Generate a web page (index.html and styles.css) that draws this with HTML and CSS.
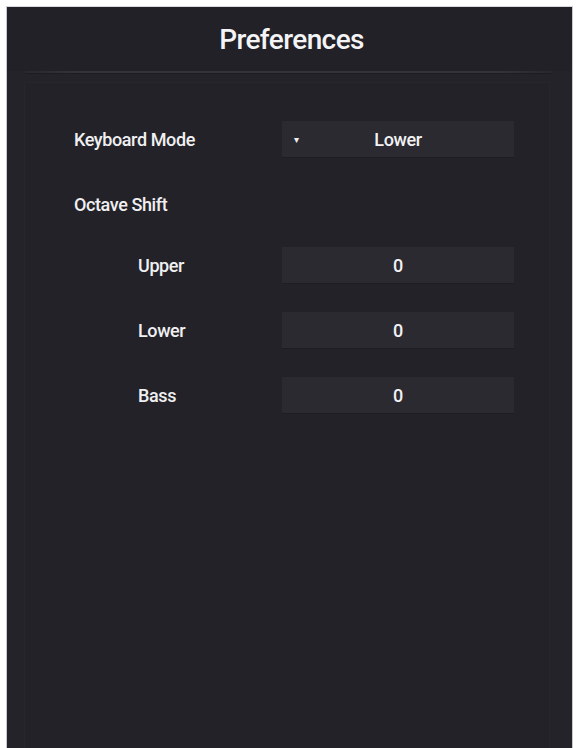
FILE: index.html
```html
<!DOCTYPE html>
<html lang="en">
<head>
<meta charset="utf-8">
<title>Preferences</title>
<link rel="stylesheet" href="styles.css">
</head>
<body>
<div class="window">
  <header class="header">
    <h1 class="title">Preferences</h1>
  </header>
  <div class="divider"></div>
  <main class="content">
    <div class="row">
      <span class="label">Keyboard Mode</span>
      <div class="field select">
        <span class="arrow">&#9662;</span>
        <span class="value">Lower</span>
      </div>
    </div>
    <div class="row section">
      <span class="label">Octave Shift</span>
    </div>
    <div class="row">
      <span class="label sub">Upper</span>
      <div class="field"><span class="value">0</span></div>
    </div>
    <div class="row">
      <span class="label sub">Lower</span>
      <div class="field"><span class="value">0</span></div>
    </div>
    <div class="row">
      <span class="label sub">Bass</span>
      <div class="field"><span class="value">0</span></div>
    </div>
  </main>
</div>
</body>
</html>
```

FILE: styles.css
```css
html, body {
  margin: 0;
  padding: 0;
  height: 100%;
  background: #ffffff;
}

body {
  font-family: Roboto, "Noto Sans", "Liberation Sans", sans-serif;
  color: #f2f2f4;
}

.window {
  box-sizing: border-box;
  margin: 6px 3px 0 6px;
  height: calc(100% - 6px);
  background: #242329;
  border-left: 1px solid #c8c8cc;
  border-top: 1px solid #d8d8dc;
  border-right: 1px solid #c8c8cc;
  display: flex;
  flex-direction: column;
}

.header {
  height: 64px;
  display: flex;
  align-items: center;
  justify-content: center;
  background: #222127;
}

.title {
  margin: 0;
  font-size: 28px;
  font-weight: 500;
  letter-spacing: -0.6px;
  color: #f4f4f6;
  padding-left: 4px;
}

.divider {
  height: 2px;
  margin: 0 20px 0 18px;
  background: linear-gradient(to right, rgba(60,59,66,0.2), #34333a 10%, #34333a 90%, rgba(60,59,66,0.2));
  border-bottom: 1px solid #1d1c21;
}

.content {
  flex: 1;
  margin: 8px 22px 0 17px;
  background: #232228;
  border: 1px solid #27262c;
  border-bottom: none;
  padding-top: 38px;
  display: flex;
  flex-direction: column;
  gap: 29px;
}

.row {
  display: grid;
  grid-template-columns: 257px 232px;
  align-items: center;
  height: 36px;
}

.row.section {
  margin-bottom: -4px;
}

.label {
  padding-left: 49px;
  font-size: 18px;
  font-weight: 500;
  letter-spacing: -0.4px;
  color: #f0f0f2;
}

.label.sub {
  padding-left: 113px;
}

.field {
  position: relative;
  height: 36px;
  background: #2b2a30;
  display: flex;
  align-items: center;
  justify-content: center;
  box-shadow: 0 1px 0 #1e1d22;
}

.value {
  font-size: 18px;
  font-weight: 500;
  letter-spacing: -0.4px;
  color: #f2f2f4;
}

.arrow {
  position: absolute;
  left: 12px;
  top: 50%;
  transform: translateY(-50%);
  font-size: 10px;
  color: #f0f0f2;
}
```
